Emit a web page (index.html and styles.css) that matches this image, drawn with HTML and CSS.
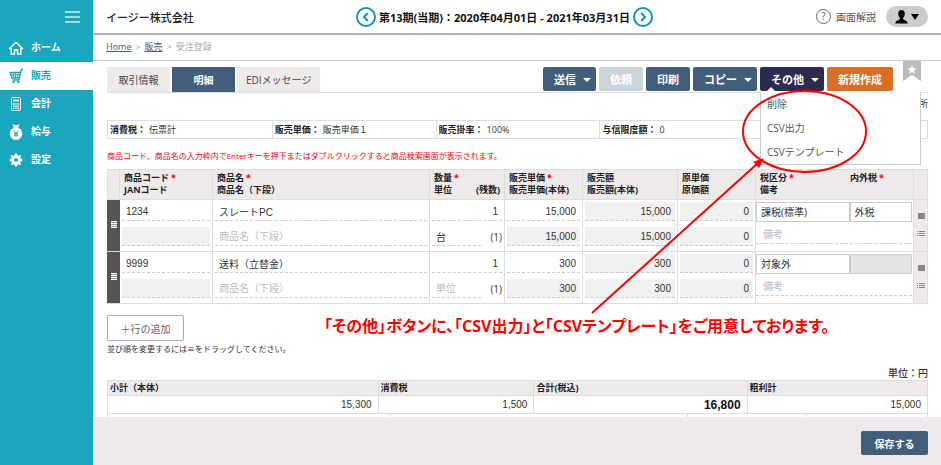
FILE: index.html
```html
<!DOCTYPE html>
<html lang="ja">
<head>
    <meta charset="UTF-8">
    <meta name="viewport" content="width=device-width, initial-scale=1.0">
    <title>受注登録</title>
    <link rel="stylesheet" href="styles.css">
</head>
<body>

    <div class="app">
        <nav class="sidebar">
            <button class="menu-toggle" aria-label="メニュー"><span></span><span></span><span></span></button>
            <a href="#">
                <svg viewBox="0 0 16 16"><path d="M1 9 8 2.2 15 9M3.2 8v6h3.3v-4h3v4h3.3V8" fill="none" stroke="currentColor" stroke-width="1.5"/></svg>
                <span>ホーム</span>
            </a>
            <a href="#" class="active">
                <svg viewBox="0 0 16 16"><path d="M2 4.5h10.5l-1 5.5H4zM15 1.5h-1.6L11 12H4.5" fill="none" stroke="currentColor" stroke-width="1.3"/><path d="M3 7h9M5.3 4.5v5.5M7.6 4.5v5.5M9.9 4.5v5.5" stroke="currentColor"/><circle cx="5.5" cy="14" r="1.2" fill="currentColor"/><circle cx="10.5" cy="14" r="1.2" fill="currentColor"/></svg>
                <span>販売</span>
            </a>
            <a href="#">
                <svg viewBox="0 0 16 16"><rect x="3.500" y="1.500" width="9" height="13" rx="1" fill="none" stroke="currentColor"/><path d="M5 4.5h6" stroke="currentColor" stroke-width="2"/><path d="M5 8h6M5 10.2h6M5 12.4h6" stroke="currentColor" stroke-width="1.4" stroke-dasharray="1.5 .7"/></svg>
                <span>会計</span>
            </a>
            <a href="#">
                <svg viewBox="0 0 16 16"><path d="M4.500 0 8 1.500 11.500 0 10 4H6z" fill="currentColor"/><circle cx="8" cy="9.600" r="6.300" fill="currentColor"/><path d="M5.800 6.500 8 9.400l2.200-2.900M8 9.400V13M6 9.600h4M6 11.300h4" fill="none" stroke="#1aa6bd"/></svg>
                <span>給与</span>
            </a>
            <a href="#">
                <svg viewBox="0 0 16 16"><circle cx="8" cy="8" r="3.400" fill="none" stroke="currentColor" stroke-width="2.800"/><path d="M8 1.800v2M8 12.200v2M1.800 8h2M12.200 8h2M3.600 3.600 5 5M11 11l1.400 1.400M3.600 12.400 5 11M11 5l1.400-1.400" stroke="currentColor" stroke-width="2.600"/></svg>
                <span>設定</span>
            </a>
        </nav>

        <div class="main">
            <header class="topbar">
                <span class="company">イージー株式会社</span>
                <div class="period">
                    <button aria-label="前期"><svg viewBox="0 0 20 20"><circle cx="10" cy="10" r="9" /><path d="M11.800 6 8 10l3.800 4"/></svg></button>
                    <span>第13期(当期)：2020年04月01日 - 2021年03月31日</span>
                    <button aria-label="次期"><svg viewBox="0 0 20 20"><circle cx="10" cy="10" r="9" /><path d="M8.200 6 12 10l-3.800 4"/></svg></button>
                </div>
                <div class="tools">
                    <a href="#" class="help"><span class="help-mark">?</span>画面解説</a>
                    <button class="user" aria-label="ユーザー">
                        <svg viewBox="0 0 28 14"><path d="M8.500 0C6.300 0 5.200 1.600 5.200 3.700c0 1.700.7 3.100 1.700 4v1.200C6.300 10 2.300 10.200 2.300 13.500h12.400C14.700 10.200 10.700 10 10.100 8.900V7.700c1-.9 1.700-2.300 1.700-4C11.800 1.600 10.700 0 8.500 0z"/><path d="M18 4h8l-4 6z"/></svg>
                    </button>
                </div>
            </header>

            <div class="breadcrumb">
                <a href="#">Home</a><span>&gt;</span><a href="#">販売</a><span>&gt;</span><span>受注登録</span>
            </div>

            <main class="content">
                <div class="toolbar">
                    <div class="tabs">
                        <button class="tab">取引情報</button>
                        <button class="tab current">明細</button>
                        <button class="tab">EDIメッセージ</button>
                    </div>
                    <div class="actions">
                        <button class="btn caret">送信</button>
                        <button class="btn" disabled>依頼</button>
                        <button class="btn">印刷</button>
                        <button class="btn caret">コピー</button>
                        <div class="dropdown">
                            <button class="btn caret open">その他</button>
                            <ul class="dropdown-menu">
                                <li><a href="#">削除</a></li>
                                <li><a href="#">CSV出力</a></li>
                                <li><a href="#">CSVテンプレート</a></li>
                            </ul>
                        </div>
                        <button class="btn create">新規作成</button>
                    </div>
                    <button class="bookmark" aria-label="ブックマーク">
                        <svg viewBox="0 0 18 20"><path d="M0 0h18v20l-9-6-9 6z" fill="#bbb"/><path d="m9 4 1.300 3.100 3.400.3-2.600 2.200.8 3.300L9 11.100l-2.900 1.800.8-3.300-2.600-2.200 3.400-.3z" fill="#fff"/></svg>
                    </button>
                </div>

                <p class="place">所</p>

                <dl class="conditions">
                    <div><dt>消費税：</dt><dd>伝票計</dd></div>
                    <div><dt>販売単価：</dt><dd>販売単価１</dd></div>
                    <div><dt>販売掛率：</dt><dd>100%</dd></div>
                    <div><dt>与信限度額：</dt><dd>0</dd></div>
                    <div></div>
                </dl>

                <p class="notice">商品コード、商品名の入力枠内でEnterキーを押下またはダブルクリックすると商品検索画面が表示されます。</p>

                <table class="items">
                    <colgroup>
                        <col class="c-handle"><col class="c-code"><col><col class="c-qty"><col class="c-price"><col class="c-amount"><col class="c-price"><col class="c-tax"><col class="c-tools">
                    </colgroup>
                    <thead>
                        <tr>
                            <th></th>
                            <th>商品コード<i>*</i><br>JANコード</th>
                            <th>商品名<i>*</i><br>商品名（下段）</th>
                            <th>数量<i>*</i><br><span class="split"><span>単位</span><span>(残数)</span></span></th>
                            <th>販売単価<i>*</i><br>販売単価(本体)</th>
                            <th>販売額<br>販売額(本体)</th>
                            <th>原単価<br>原価額</th>
                            <th><span class="split tax-head"><span>税区分<i>*</i></span><span>内外税<i>*</i></span></span>備考</th>
                            <th></th>
                        </tr>
                    </thead>
                    <tbody>
                        <tr>
                            <td class="handle"><span></span></td>
                            <td><div class="pair"><input aria-label="商品コード" value="1234"><input aria-label="JANコード" readonly></div></td>
                            <td><div class="pair"><input aria-label="商品名" value="スレートPC"><input aria-label="商品名（下段）" placeholder="商品名（下段）"></div></td>
                            <td><div class="pair num"><input aria-label="数量" value="1"><div class="unit"><input aria-label="単位" value="台" placeholder="単位"><span>(1)</span></div></div></td>
                            <td><div class="pair num"><input aria-label="販売単価" value="15,000"><input aria-label="販売単価(本体)" value="15,000" readonly></div></td>
                            <td><div class="pair num"><input aria-label="販売額" value="15,000" readonly><input aria-label="販売額(本体)" value="15,000" readonly></div></td>
                            <td><div class="pair num"><input aria-label="原単価" value="0" readonly><input aria-label="原価額" value="0" readonly></div></td>
                            <td class="tax">
                                <div class="selects">
                                    <select aria-label="税区分"><option>課税(標準)</option></select>
                                    <select aria-label="内外税"><option>外税</option></select>
                                </div>
                                <input aria-label="備考" placeholder="備考">
                            </td>
                            <td class="row-tools">
                                <button aria-label="メモ"><svg viewBox="0 0 8 8"><path d="M1 1h7v6H1z"/></svg></button>
                                <button aria-label="行メニュー"><svg viewBox="0 0 8 8"><path d="M0 1h1v1H0zM2 1h6v1H2zM0 3h1v1H0zM2 3h6v1H2zM0 5h1v1H0zM2 5h6v1H2z"/></svg></button>
                            </td>
                        </tr>
                        <tr>
                            <td class="handle"><span></span></td>
                            <td><div class="pair"><input aria-label="商品コード" value="9999"><input aria-label="JANコード" readonly></div></td>
                            <td><div class="pair"><input aria-label="商品名" value="送料（立替金）"><input aria-label="商品名（下段）" placeholder="商品名（下段）"></div></td>
                            <td><div class="pair num"><input aria-label="数量" value="1"><div class="unit"><input aria-label="単位" placeholder="単位"><span>(1)</span></div></div></td>
                            <td><div class="pair num"><input aria-label="販売単価" value="300"><input aria-label="販売単価(本体)" value="300" readonly></div></td>
                            <td><div class="pair num"><input aria-label="販売額" value="300" readonly><input aria-label="販売額(本体)" value="300" readonly></div></td>
                            <td><div class="pair num"><input aria-label="原単価" value="0" readonly><input aria-label="原価額" value="0" readonly></div></td>
                            <td class="tax">
                                <div class="selects">
                                    <select aria-label="税区分"><option>対象外</option></select>
                                    <select aria-label="内外税" disabled></select>
                                </div>
                                <input aria-label="備考" placeholder="備考">
                            </td>
                            <td class="row-tools">
                                <button aria-label="メモ"><svg viewBox="0 0 8 8"><path d="M1 1h7v6H1z"/></svg></button>
                                <button aria-label="行メニュー"><svg viewBox="0 0 8 8"><path d="M0 1h1v1H0zM2 1h6v1H2zM0 3h1v1H0zM2 3h6v1H2zM0 5h1v1H0zM2 5h6v1H2z"/></svg></button>
                            </td>
                        </tr>
                    </tbody>
                </table>

                <button class="add-row">＋行の追加</button>
                <p class="hint">並び順を変更するには≡をドラッグしてください。</p>
                <p class="currency">単位：円</p>

                <table class="totals">
                    <colgroup><col class="t-sub"><col class="t-tax"><col class="t-sum"><col></colgroup>
                    <thead>
                        <tr><th>小計（本体）</th><th>消費税</th><th>合計(税込)</th><th>粗利計</th></tr>
                    </thead>
                    <tbody>
                        <tr><td>15,300</td><td>1,500</td><td class="grand">16,800</td><td>15,000</td></tr>
                    </tbody>
                </table>
                <div class="memo-row"><div></div><div></div><div></div><div></div></div>
            </main>

            <footer class="savebar">
                <button class="btn save">保存する</button>
            </footer>
        </div>

        <svg class="callout" viewBox="0 0 941 465" aria-hidden="true">
            <ellipse cx="804.500" cy="131.500" rx="61.500" ry="40.500"/>
            <path d="M592 313 758 163"/>
            <path class="tip" d="m762 160-3.200 6.500-3.800-4.200z"/>
        </svg>
        <p class="callout-text">「その他」ボタンに、「CSV出力」と「CSVテンプレート」をご用意しております。</p>
    </div>

</body>
</html>
```
FILE: styles.css
```css
* {
    box-sizing: border-box;
}
body {
    margin: 0;
    font-family: "Open Sans", "Noto Sans CJK JP", sans-serif;
    font-size: 10px;
    color: #333;
    background: #fff;
}
p, dl, dd, ul {
    margin: 0;
    padding: 0;
}
button, input, select {
    font-family: inherit;
    font-size: 10px;
    color: inherit;
    margin: 0;
    padding: 0;
    border: none;
    border-radius: 0;
    background: none;
}
button {
    cursor: pointer;
}
svg {
    display: block;
}
.app {
    position: relative;
    display: flex;
    height: 100vh;
    overflow: hidden;
}

/* sidebar */
.sidebar {
    flex: 0 0 93px;
    background: #1aa6bd;
}
.menu-toggle {
    display: flex;
    flex-direction: column;
    justify-content: center;
    gap: 3px;
    width: 15px;
    height: 34px;
    margin-left: 65px;
}
.menu-toggle span {
    height: 2px;
    background: #a3dbe5;
}
.sidebar a {
    display: flex;
    align-items: center;
    gap: 7px;
    height: 28px;
    padding: 0 8px;
    color: #fff;
    font-weight: bold;
    text-decoration: none;
}
.sidebar a svg {
    width: 16px;
    height: 16px;
}
.sidebar a span {
    padding-bottom: 4px;
}
.sidebar a.active {
    background: #fff;
    color: #1aa6bd;
}

/* header */
.main {
    flex: 1;
    min-width: 0;
    display: flex;
    flex-direction: column;
}
.topbar {
    flex: none;
    display: grid;
    grid-template-columns: 250px auto 1fr;
    align-items: center;
    height: 35px;
    padding: 0 13px;
    border-bottom: 2px solid #b4b4b4;
}
.company {
    font-size: 11px;
    font-weight: 500;
    color: #222;
}
.period {
    display: flex;
    align-items: center;
    gap: 3px;
    font-size: 11px;
    font-weight: bold;
    color: #111;
}
.period svg {
    width: 20px;
    height: 20px;
    fill: none;
    stroke: #1793b1;
    stroke-width: 2;
}
.tools {
    display: flex;
    align-items: center;
    justify-content: flex-end;
    gap: 10px;
}
.help {
    display: flex;
    align-items: center;
    gap: 5px;
    color: #555;
    text-decoration: none;
}
.help-mark {
    width: 15px;
    height: 15px;
    border: 1px solid #666;
    border-radius: 50%;
    line-height: 13px;
    text-align: center;
}
.user {
    width: 42px;
    height: 21px;
    padding: 0 7px;
    border-radius: 11px;
    background: #ccc;
}
.user svg {
    width: 28px;
    height: 14px;
}
.breadcrumb {
    flex: none;
    display: flex;
    align-items: center;
    gap: 4px;
    height: 26px;
    padding: 0 13px 2px;
    border-bottom: 1px solid #ccc;
    font-size: 9px;
    color: #aaa;
}
.breadcrumb a {
    color: #45607c;
}

/* tabs and action buttons */
.content {
    flex: 1;
    min-height: 0;
    overflow: hidden;
    padding: 0 13px 0 14px;
}
.toolbar {
    display: flex;
    align-items: flex-end;
    height: 32px;
    border-bottom: 1px solid #ddd;
}
.tabs {
    display: flex;
    gap: 2px;
    margin-right: auto;
}
.tab {
    min-width: 63px;
    height: 25px;
    padding: 0 9px;
    background: #eeeaea;
    color: #444;
}
.tab.current {
    background: #435e7a;
    color: #fff;
    font-weight: bold;
}
.actions {
    display: flex;
    gap: 3px;
    align-self: flex-start;
    padding-top: 6px;
}
.btn {
    height: 24px;
    padding: 0 11px;
    border-radius: 2px;
    background: #435e7a;
    color: #fff;
    font-size: 11px;
    font-weight: bold;
}
.btn:disabled {
    background: #ccd4db;
}
.btn.caret::after {
    content: "";
    display: inline-block;
    margin: 0 -6px 2px 7px;
    border: 4px solid transparent;
    border-top-color: #fff;
    border-bottom: none;
}
.btn.open {
    background: #2d2b50;
}
.btn.create {
    background: #da6f23;
}
.dropdown {
    position: relative;
}
.dropdown-menu {
    position: absolute;
    top: 25px;
    left: 0;
    z-index: 1;
    width: 161px;
    border: 1px solid #ccc;
    border-top: none;
    background: #fff;
    list-style: none;
}
.dropdown-menu::before {
    content: "";
    position: absolute;
    top: -5px;
    left: 5px;
    border: 5px solid transparent;
    border-top: none;
    border-bottom-color: #fff;
}
.dropdown-menu a {
    display: block;
    padding-left: 6px;
    line-height: 24px;
    color: #555;
    text-decoration: none;
}
.bookmark {
    align-self: flex-start;
    margin: 0 7px 0 10px;
}
.bookmark svg {
    width: 18px;
    height: 20px;
}

/* conditions */
.place {
    padding-top: 4px;
    line-height: 14px;
    text-align: right;
    font-size: 9px;
}
.conditions {
    display: grid;
    grid-template-columns: repeat(5, 1fr);
    height: 19px;
    margin-top: 9px;
    border: 1px solid #ddd;
    font-size: 9px;
}
.conditions div {
    display: flex;
    align-items: center;
    gap: 3px;
    padding-left: 2px;
}
.conditions div + div {
    border-left: 1px solid #ddd;
}
.conditions dt {
    font-weight: bold;
    color: #222;
}
.notice {
    margin: 10px 0 7px;
    line-height: 13px;
    font-size: 8px;
    color: #f00;
}

/* item table */
table {
    width: 100%;
    table-layout: fixed;
    border-collapse: collapse;
}
th, td {
    border: 1px solid #ddd;
    padding: 0;
    text-align: left;
}
.c-handle { width: 12px; }
.c-code { width: 93px; }
.c-qty { width: 75px; }
.c-price { width: 78px; }
.c-amount { width: 95px; }
.c-tax { width: 158px; }
.c-tools { width: 14px; }
.items th {
    height: 30px;
    padding: 2px 4px;
    background: #eeeaea;
    font-size: 9px;
    line-height: 12px;
    color: #222;
    vertical-align: top;
}
.items th i {
    margin-left: 2px;
    color: #f00;
    font-style: normal;
}
.split {
    display: flex;
    justify-content: space-between;
}
.tax-head span:last-child {
    width: 59px;
}
.items td {
    height: 52px;
    padding: 2px 2px 5px;
    vertical-align: top;
}
.items td.handle {
    background: #555;
    border-color: #555 #555 #ddd;
    vertical-align: middle;
}
.handle span {
    display: block;
    width: 6px;
    height: 7px;
    margin: auto;
    background: repeating-linear-gradient(#fff 0 1px, #999 1px 2px);
}
.pair {
    display: grid;
    gap: 6px;
}
.items input {
    width: 100%;
    min-width: 0;
    height: 19px;
    padding: 0 4px;
    border-bottom: 1px dashed #ccc;
    font-family: "Liberation Sans", "Noto Sans CJK JP", sans-serif;
}
.items input:read-only {
    background: #f1f1f1;
}
.items input::placeholder {
    color: #bbb;
}
.num input {
    text-align: right;
}
.unit {
    display: flex;
    justify-content: space-between;
    align-items: center;
}
.items .unit input {
    width: 49px;
    text-align: left;
}
.items td.tax {
    padding: 2px 1px 0 0;
}
.selects {
    display: grid;
    grid-template-columns: 3fr 2fr;
}
.selects select {
    appearance: none;
    height: 20px;
    padding: 0 4px;
    border: 1px solid #ccc;
}
.selects select:disabled {
    background: #e3e3e3;
    opacity: 1;
}
.items .tax input {
    margin-top: 3px;
    padding-left: 7px;
}
.items td.row-tools {
    padding: 12px 0 0;
    background: #eeeaea;
}
.row-tools button {
    display: block;
    margin: 0 auto 10px;
}
.row-tools svg {
    width: 8px;
    height: 8px;
    fill: #888;
}

/* below the table */
.add-row {
    width: 77px;
    height: 26px;
    margin-top: 11px;
    border: 1px solid #aaa;
    border-radius: 2px;
    color: #666;
}
.hint {
    margin-top: 1px;
    line-height: 14px;
    font-size: 8px;
}
.currency {
    margin-top: 10px;
    line-height: 14px;
    text-align: right;
    font-size: 10px;
    font-weight: 500;
}
.t-sub { width: 33%; }
.t-tax { width: 19%; }
.t-sum { width: 26%; }
.totals th {
    height: 15px;
    padding-left: 2px;
    background: #eeeaea;
    font-size: 9px;
    line-height: 14px;
    color: #222;
}
.totals td {
    height: 18px;
    padding-right: 6px;
    font-family: "Liberation Sans", sans-serif;
    text-align: right;
}
.totals .grand {
    font-size: 12px;
    font-weight: bold;
    color: #111;
}
.memo-row {
    display: grid;
    grid-template-columns: 282px 1fr 119px 121px;
    height: 20px;
    border: 1px solid #ddd;
    border-top: none;
}
.memo-row div + div {
    border-left: 1px solid #ddd;
}
.savebar {
    flex: none;
    display: flex;
    justify-content: flex-end;
    align-items: center;
    height: 48px;
    padding: 4px 13px 0;
    background: #eeeaea;
}
.save {
    width: 67px;
    font-size: 10px;
}

/* annotation over the page */
.callout {
    position: absolute;
    top: 0;
    left: 0;
    z-index: 2;
    width: 941px;
    height: 465px;
    fill: none;
    stroke: #f00;
    stroke-width: 2;
    pointer-events: none;
}
.callout .tip {
    fill: #f00;
}
.callout-text {
    position: absolute;
    top: 314px;
    left: 324px;
    z-index: 2;
    line-height: 24px;
    font-size: 16px;
    font-weight: bold;
    font-feature-settings: "palt";
    white-space: nowrap;
    color: #f00;
}
```
